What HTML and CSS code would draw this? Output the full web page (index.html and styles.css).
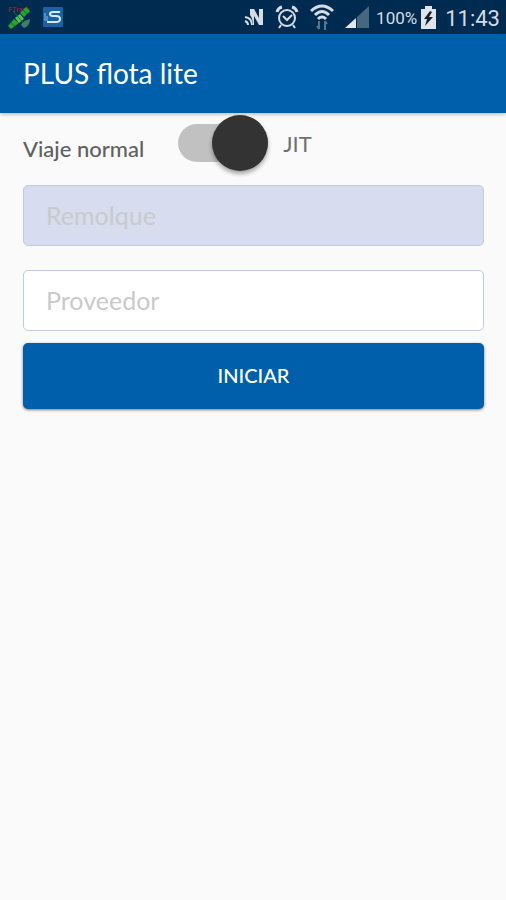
FILE: index.html
```html
<!DOCTYPE html>
<html lang="es">
<head>
  <meta charset="UTF-8" />
  <meta name="viewport" content="width=device-width, initial-scale=1.0" />
  <title>PLUS flota lite</title>
  <link rel="stylesheet" href="styles.css">
</head>
<body>
  <div class="status-bar">
    <div class="status-left">
      <svg width="26" height="24" viewBox="0 0 26 24">
        <text x="1" y="7" class="gps-text">FTrack</text>
        <path d="M1 21 L7 14 L12 18 L4 24 Z" fill="#27a32f" />
        <path d="M8 13 L13 9 L17 14 L12 18 Z" fill="#4cc552" />
        <path d="M13 8 L19 2 L23 6 L17 12 Z" fill="#27a32f" />
        <path d="M4 18 L8 21 M16 5 L20 9 M6 6 L18 20" stroke="#1b6b3a" stroke-width="1" />
        <path d="M14 20 Q15 16 23 14 Q23 21 17 23 Z" fill="#3f7d68" />
      </svg>
      <svg width="20" height="20" viewBox="0 0 20 20">
        <rect width="20" height="20" rx="1" fill="#1763a6" />
        <path d="M17 5 H10 Q7 5 7 7 Q7 9 10 9 H13 Q17 9 17 12 Q17 15 13 15 H4" fill="none" stroke="#dbe8f4" stroke-width="2" />
        <path d="M2 6 V14 M4 9 V14" stroke="#8cb4d8" stroke-width="1" />
      </svg>
    </div>
    <div class="status-right">
      <svg class="nfc" width="20" height="20" viewBox="0 0 20 20">
        <path d="M6 8 V2 H10 L15 11 V2 H19 V18 H15 L10 9 V18 H9 Q9 12 6 8 Z" fill="#d5dce4" />
        <path d="M1 10 Q8 11 8 18 M1 14 Q4 15 4 18" fill="none" stroke="#d5dce4" stroke-width="2" />
      </svg>
      <svg class="alarm" width="24" height="24" viewBox="0 0 24 24" fill="none" stroke="#d5dce4" stroke-width="2">
        <circle cx="12" cy="13" r="8" />
        <path d="M8 11 L12 15 L17 10" />
        <path d="M2 7 Q3 3 7 2 M22 7 Q21 3 17 2" stroke-width="3" />
        <path d="M6 20 L4 23 M18 20 L20 23" />
      </svg>
      <svg class="wifi" width="24" height="26" viewBox="0 0 24 26" fill="none" stroke="#d5dce4" stroke-width="2">
        <path d="M1 7 Q12 -3 23 7" stroke-width="3" />
        <path d="M5 11 Q12 4 19 11" stroke-width="3" />
        <path d="M8 15 Q12 11 16 15" stroke-width="3" />
        <path d="M9 25 V17 M7 22 L9 25 M15 26 V17 M17 20 L15 17" stroke="#56758f" />
      </svg>
      <svg class="signal" width="24" height="22" viewBox="0 0 24 22">
        <path d="M12 11 L24 0 V22 H12 Z" fill="#47677f" />
        <path d="M0 22 L11 12 V22 Z" fill="#e4e8ed" />
      </svg>
      <span class="percent">100%</span>
      <svg class="battery" width="15" height="23" viewBox="0 0 15 23">
        <path d="M4 0 H11 V3 H15 V23 H0 V3 H4 Z" fill="#dfe5eb" />
        <path d="M9 5 L3 13 H6 L4 20 L12 11 H8 L11 6 Z" fill="#16202b" />
      </svg>
      <span class="clock">11:43</span>
    </div>
  </div>

  <header class="app-bar">
    <h1>PLUS flota lite</h1>
  </header>

  <main>
    <form class="trip-form">
      <div class="trip-type">
        <span class="normal-label">Viaje normal</span>
        <input type="checkbox" role="switch" class="switch" id="jit" checked>
        <label class="jit-label" for="jit">JIT</label>
      </div>
      <input type="text" class="field filled" placeholder="Remolque" aria-label="Remolque">
      <input type="text" class="field" placeholder="Proveedor" aria-label="Proveedor">
      <button type="button" class="start-btn">INICIAR</button>
    </form>
  </main>
</body>
</html>
```
FILE: styles.css
```css
* {
  box-sizing: border-box;
}

body {
  margin: 0;
  min-height: 100vh;
  background: #fafafa;
  font-family: Lato, sans-serif;
}

.status-bar {
  display: flex;
  justify-content: space-between;
  height: 34px;
  padding: 0 6px 0 7px;
  background: #002b50;
  color: #d5dce4;
  font-family: Roboto, sans-serif;
}

.status-left,
.status-right {
  display: flex;
  align-items: center;
}

.status-left {
  gap: 10px;
}

.gps-text {
  font-family: Roboto, sans-serif;
  font-size: 7px;
  font-weight: bold;
  fill: #7c2638;
}

.nfc,
.alarm,
.wifi {
  margin-right: 11px;
}

.signal {
  margin-right: 7px;
}

.percent {
  margin-right: 4px;
  padding-top: 2px;
  font-size: 17px;
}

.battery {
  margin-right: 9px;
}

.clock {
  padding-top: 2px;
  font-size: 22px;
}

.app-bar {
  position: relative;
  display: flex;
  align-items: center;
  height: 79px;
  padding: 0 23px 2px;
  background: #005faa;
  box-shadow: 0 1px 4px rgba(0, 0, 0, 0.3);
}

.app-bar h1 {
  margin: 0;
  color: #fff;
  font-size: 28px;
  font-weight: 400;
}

.trip-form {
  display: flex;
  flex-direction: column;
  padding: 2px 22px 24px 23px;
}

.trip-type {
  display: flex;
  align-items: center;
  height: 56px;
  margin-bottom: 14px;
  color: #606060;
  font-size: 22px;
}

.normal-label {
  padding-top: 10px;
  margin-right: 34px;
  font-weight: 500;
}

.jit-label {
  margin-left: 15px;
  color: #707070;
}

.switch {
  appearance: none;
  position: relative;
  width: 90px;
  height: 38px;
  margin: 0;
  border-radius: 19px;
  background: #c1c1c1;
}

.switch::before {
  content: "";
  position: absolute;
  top: -9px;
  left: 0;
  width: 56px;
  height: 56px;
  border-radius: 50%;
  background: #333;
  box-shadow: 0 3px 4px rgba(0, 0, 0, 0.35);
}

.switch:checked::before {
  left: auto;
  right: 0;
}

.field {
  width: 100%;
  height: 61px;
  margin: 0 0 24px;
  padding: 0 22px 2px;
  border: 1px solid #bfcbe0;
  border-radius: 5px;
  background: #fff;
  color: #444;
  font-family: inherit;
  font-size: 25px;
}

.field + .field {
  margin-bottom: 12px;
}

.field.filled {
  background: #d7dcef;
}

.field::placeholder {
  color: #c8cacc;
  opacity: 1;
}

.start-btn {
  height: 66px;
  padding: 0 0 2px;
  border: 0;
  border-radius: 5px;
  background: #005faa;
  box-shadow: 0 1px 3px rgba(0, 0, 0, 0.5);
  color: #fff;
  font-family: inherit;
  font-size: 20px;
  font-weight: 500;
}
```
